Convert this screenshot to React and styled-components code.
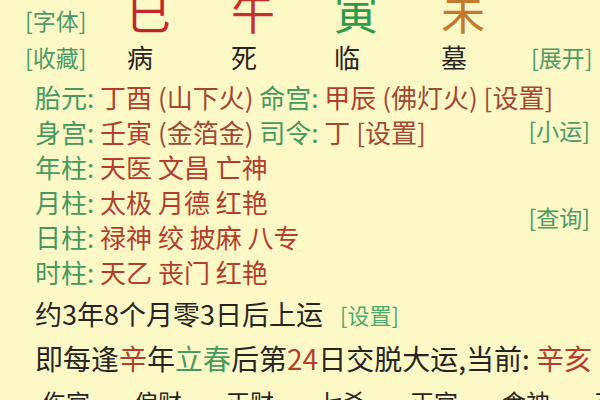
import React from "react";
import styled, { createGlobalStyle } from "styled-components";

const Global = createGlobalStyle`
  html, body { margin: 0; padding: 0; background: #fcf9c7; }
  body { font-family: "Noto Sans CJK SC", "Noto Sans", sans-serif; }
  #root { width: 600px; height: 400px; overflow: hidden; }
`;

const Page = styled.div`
  width: 600px;
  height: 400px;
  overflow: hidden;
  background: #fcf9c7;
  color: #262420;
`;

const Header = styled.div`
  display: grid;
  grid-template-columns: 102px 104px 103px 107px 90px 1fr;
  grid-template-rows: 40px 34px;
  padding-left: 25px;
  align-items: center;
`;

const Link = styled.span`
  font-size: ${(p) => p.$size || 23}px;
  line-height: 1;
  color: ${(p) => p.$color || "#4f9a66"};
  white-space: nowrap;
`;

const Big = styled.span`
  align-self: start;
  margin-top: -11px;
  font-size: 44px;
  line-height: 44px;
  color: ${(p) => p.$color};
`;

const Small = styled.span`
  font-size: 26px;
  line-height: 1;
  color: #28241f;
`;

const Info = styled.div`
  display: grid;
  grid-template-columns: 1fr auto;
  grid-auto-rows: 35px;
  padding: 0 10px 0 35px;
  margin-top: 5px;
  align-items: center;
`;

const Line = styled.div`
  grid-column: ${(p) => (p.$full ? "1 / -1" : "1")};
  font-size: 26px;
  line-height: 35px;
  white-space: nowrap;
`;

const Side = styled.div`
  grid-column: 2;
  grid-row: ${(p) => p.$row};
  align-self: center;
`;

const Lbl = styled.span`
  color: #469a60;
`;
const Val = styled.span`
  color: ${(p) => p.$tone || "#b23f2d"};
`;

const Footer = styled.div`
  padding-left: 35px;
  margin-top: 3px;
`;

const Text = styled.div`
  font-size: ${(p) => p.$size || 27}px;
  line-height: 44px;
  white-space: nowrap;
  color: #28241f;
  display: flex;
  align-items: center;
`;

const Gear = styled.span`
  font-size: 22px;
  color: #4fa86d;
  margin-left: 17px;
`;

const Gods = styled.div`
  display: grid;
  grid-template-columns: repeat(7, 92px);
  padding-left: 42px;
  font-size: 24px;
  line-height: 44px;
  color: #28241f;
  white-space: nowrap;
`;

const RED = "#b23f2d";
const BROWN = "#9e4a34";
const GREEN = "#469a60";

export default function App() {
  return (
    <Page>
      <Global />
      <Header>
        <Link>[字体]</Link>
        <Big $color="#c2262a">巳</Big>
        <Big $color="#c8302c">午</Big>
        <Big $color="#2f9a4b">寅</Big>
        <Big $color="#c47a2c">未</Big>
        <span />
        <Link>[收藏]</Link>
        <Small>病</Small>
        <Small>死</Small>
        <Small>临</Small>
        <Small>墓</Small>
        <Link>[展开]</Link>
      </Header>
      <Info>
        <Line $full>
          <Lbl>胎元: </Lbl>
          <Val>丁酉 </Val>
          <Val $tone={BROWN}>(山下火) </Val>
          <Lbl>命宫: </Lbl>
          <Val>甲辰 </Val>
          <Val $tone={BROWN}>(佛灯火) </Val>
          <Val $tone={BROWN}>[设置]</Val>
        </Line>
        <Line>
          <Lbl>身宫: </Lbl>
          <Val>壬寅 </Val>
          <Val $tone={BROWN}>(金箔金) </Val>
          <Lbl>司令: </Lbl>
          <Val $tone={BROWN}>丁 </Val>
          <Val $tone={BROWN}>[设置]</Val>
        </Line>
        <Side $row="2">
          <Link>[小运]</Link>
        </Side>
        <Line>
          <Lbl>年柱: </Lbl>
          <Val>天医 文昌 亡神</Val>
        </Line>
        <Line>
          <Lbl>月柱: </Lbl>
          <Val>太极 月德 红艳</Val>
        </Line>
        <Line>
          <Lbl>日柱: </Lbl>
          <Val>禄神 绞 披麻 八专</Val>
        </Line>
        <Side $row="4 / span 2">
          <Link>[查询]</Link>
        </Side>
        <Line>
          <Lbl>时柱: </Lbl>
          <Val>天乙 丧门 红艳</Val>
        </Line>
      </Info>
      <Footer>
        <Text>
          约3年8个月零3日后上运<Gear>[设置]</Gear>
        </Text>
        <Text $size={28}>
          <span>
            即每逢<Val $tone={RED}>辛</Val>年<Val $tone={GREEN}>立春</Val>后第
            <Val $tone={RED}>24</Val>日交脱大运,当前: <Val $tone={RED}>辛亥</Val>
          </span>
        </Text>
      </Footer>
      <Gods>
        <span>伤官</span>
        <span>偏财</span>
        <span>正财</span>
        <span>七杀</span>
        <span>正官</span>
        <span>食神</span>
        <span>正印</span>
      </Gods>
    </Page>
  );
}
